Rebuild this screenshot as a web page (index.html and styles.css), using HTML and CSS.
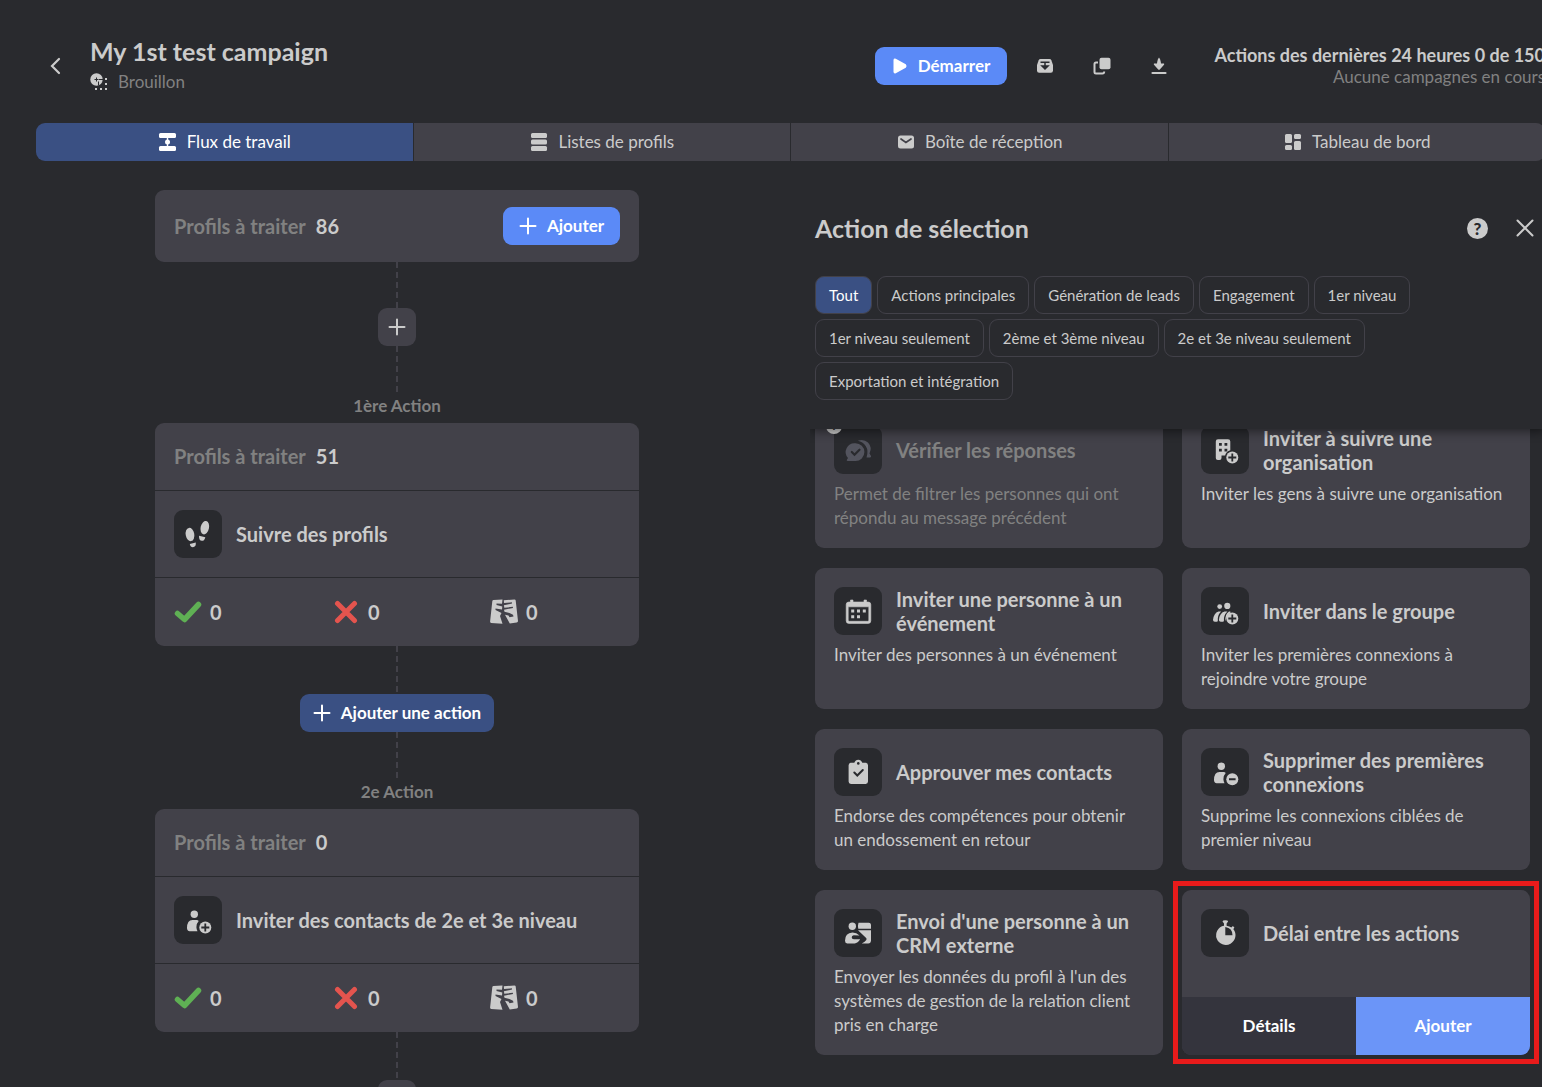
FILE: index.html
```html
<!doctype html>
<html lang="fr">

<head>
    <meta charset="utf-8">
    <title>My 1st test campaign</title>
    <link rel="stylesheet" href="styles.css">
</head>

<body>
    <svg class="sprite" aria-hidden="true">
        <symbol id="plus" viewBox="0 0 18 18">
            <path d="M9 1.5v15M1.5 9h15" fill="none" stroke="currentColor" stroke-width="2" stroke-linecap="round"/>
        </symbol>
        <symbol id="check" viewBox="0 0 28 24">
            <path d="M3.5 13.5L10.5 19.5L24.5 4.5" fill="none" stroke="#5fb054" stroke-width="5.5" stroke-linecap="round" stroke-linejoin="round"/>
        </symbol>
        <symbol id="cross" viewBox="0 0 24 24">
            <path d="M3.5 3.5l17 17M20.5 3.5l-17 17" fill="none" stroke="#e4544e" stroke-width="5" stroke-linecap="round"/>
        </symbol>
        <symbol id="torn" viewBox="0 0 28 26">
            <path d="M3.500 1L12.500.5L12 4.800L6.500 4.500V6L12.300 7.500L12 10.500L5.500 9.500V11L11.500 14L10 17L12.500 24.800L1.200 24Q0 23.800.1 22.500L2.300 2.200Q2.500 1 3.500 1z"/>
            <path d="M13.800 1.200L24.500.4q1 0 1.200 1L28 22q0 1.300-1.300 1.500L19.800 24.600L15 15.800L18.500 16.500L19.500 18.300L23.500 17.500L23 15.800L19.500 14L14.500 12.800L14 10.800L23 9L22.800 7.800L14.300 8.800L13.900 6.300L22 4.500L21.900 3.300L14 4z"/>
        </symbol>
        <symbol id="steps" viewBox="0 0 48 48">
            <ellipse cx="16" cy="24.5" rx="4.3" ry="6.7" transform="rotate(-10 16 24.5)"/>
            <path d="M15.800 34l6-1.500q.3 4.600-3 4.700-2.300 0-3-3.200z"/>
            <ellipse cx="30.8" cy="17.7" rx="4.2" ry="6.8" transform="rotate(12 30.8 17.7)"/>
            <path d="M25 25.700l6.300 1.500q-.8 3.700-3.500 3.600-3-.3-2.800-5.100z"/>
        </symbol>
        <symbol id="person" viewBox="0 0 48 48">
            <circle cx="20.3" cy="18.2" r="3.7"/>
            <path d="M18.500 24h4.200q1.300.2 2 1-2.600 2.800-2.300 6.300.1 2 1.100 3.900H15.700Q13 35 13 32q0-7.800 5.500-8z"/>
        </symbol>
        <symbol id="person-plus" viewBox="0 0 48 48">
            <use href="#person"/>
            <use href="#badge-plus"/>
        </symbol>
        <symbol id="person-minus" viewBox="0 0 48 48">
            <use href="#person"/>
            <circle cx="31.3" cy="31.2" r="6"/>
            <path d="M28 31.200h6.600" stroke="#292a2e" stroke-width="2"/>
        </symbol>
        <symbol id="badge-plus" viewBox="0 0 48 48">
            <circle cx="31.3" cy="31.5" r="6"/>
            <path d="M31.300 27.500v8M27.300 31.500h8" stroke="#292a2e" stroke-width="1.8"/>
        </symbol>
        <symbol id="calendar" viewBox="0 0 48 48">
            <path d="M16.500 13h2.500v2h11v-2h2.500v2h1.700q2.600 0 2.600 2.600v16.200q0 2.600-2.600 2.600H14.800q-2.600 0-2.600-2.600V17.600q0-2.600 2.600-2.600h1.700zM14.200 19.800v13.500q0 1 1 1h18.600q1 0 1-1V19.800z" fill-rule="evenodd" stroke="currentColor" stroke-width=".6"/>
            <path d="M17.200 22.500h3v3h-3zM23 22.500h3v3h-3zM28.800 22.500h3v3h-3zM17.200 28.300h3v3h-3zM23 28.300h3v3h-3z"/>
        </symbol>
        <symbol id="group" viewBox="0 0 48 48">
            <circle cx="18.7" cy="19.6" r="2.4"/>
            <circle cx="26.3" cy="18.9" r="3.1"/>
            <path d="M17.500 24.500q-4.800 1.500-5.500 8.500.1 1.700 1.800 1.800 2.500 0 3-.6-.7-5.700 3.300-9.700zM23.500 24.500q-5 1.500-5.600 8.500.1 1.700 1.800 1.800 2.800 0 3.200-.6-.6-5.700 3.500-9.700zM28 24.500q-4.500 3-3.500 9.700 1-5.400 5-8.200l-.2-1.500z"/>
            <use href="#badge-plus"/>
        </symbol>
        <symbol id="building" viewBox="0 0 48 48">
            <path d="M17 13.300h10q2.300 0 2.300 2.300v8.600q-4.300 1.200-5.200 5.300h-3.600v2.600q0 2-2 2h-1.700q-2 0-2-2V15.600q0-2.300 2.200-2.300zM18 17v2.800h2.800V17zM23.500 17v2.800h2.800V17zM18 22.800v2.800h2.800v-2.800zM23.500 22.800v2.800h2.800v-2.800z" fill-rule="evenodd"/>
            <use href="#badge-plus"/>
        </symbol>
        <symbol id="replies" viewBox="0 0 48 48">
            <path d="M21.500 17.200a8.900 8.900 0 1 1 0 17.800h-8q-1.300-.3-.5-1.400l1-1.600a8.900 8.900 0 0 1 7.500-14.800z"/>
            <path d="M23.800 14.800q6-2.200 10.200 1.800 4.500 5 1.500 10.800l1.500 2.600q.4 1.300-1 1.500h-3.500q2.300-6.600-.8-11.400-3-4.300-7.900-5.300z"/>
            <path d="M17.800 26l2.700 2.700 5-5" fill="none" stroke="#292a2e" stroke-width="2.2" stroke-linecap="round"/>
        </symbol>
        <symbol id="clipboard" viewBox="0 0 48 48">
            <path d="M17 14.800h3.300q1.200-3 4-3t4 3h3.300q2.400.1 2.400 2.500v16.300q0 2.400-2.400 2.400H17q-2.400 0-2.400-2.400V17.300q0-2.400 2.400-2.500z"/>
            <circle cx="24.3" cy="15.4" r="1.3" fill="#292a2e"/>
            <path d="M20.300 24.500l3 3 5.500-5.500" fill="none" stroke="#292a2e" stroke-width="2" stroke-linecap="round"/>
        </symbol>
        <symbol id="crm" viewBox="0 0 48 48">
            <circle cx="18.3" cy="17.2" r="3.7"/>
            <path d="M24.500 13.700h10.300q2 0 2.200 2v4.100H24.300q-1-2.200.2-6.100zM24 21.200h13v10.300q-.2 3-2.700 3h-6.600q2.500-1 4.600-3.600.8-1.200-.4-2.100zM18.500 23.500q4 .2 7 3l-5.800-.2q-2 .5-2 2 0 1.800 2.200 2h6.300q-2.500 4-5.500 4.200h-7.500q-2.200-.2-2.200-2.700 0-8 7.500-8.300z"/>
        </symbol>
        <symbol id="stopwatch" viewBox="0 0 48 48">
            <path d="M21.500 12.500q0-1.300 2.800-1.300t2.800 1.300l-1.500 2v2.200q3 .5 4.800 1.800l1-1.300 2 .7-1 2.300a9.700 9.700 0 1 1-9.400-3.500v-2.200zM24.300 18v8.300h7.200q0-7.200-7.200-8.300z" fill-rule="evenodd"/>
        </symbol>
    </svg>

    <div class="page">
        <header class="header">
            <a class="back" href="#" aria-label="Retour">
                <svg width="14" height="20" viewBox="0 0 14 20"><path d="M11 3L4 10l7 7" fill="none" stroke="currentColor" stroke-width="2.2" stroke-linecap="round"/></svg>
            </a>
            <div class="campaign">
                <h1>My 1st test campaign</h1>
                <div class="status">
                    <svg width="18" height="18" viewBox="0 0 18 18">
                        <circle cx="6.5" cy="6.5" r="6.2" fill="currentColor"/>
                        <path d="M4.500 6.500h4M6.500 4.500v4M9 6.500h4M8.500 8.500v4" stroke="#292a2e" stroke-width="1"/>
                        <path d="M15 5h2v2h-2zM15 10h2v2h-2zM15 15h2v2h-2zM10 15h2v2h-2zM5 15h2v2H5z" fill="currentColor"/>
                    </svg>
                    Brouillon
                </div>
            </div>
            <div class="tools">
                <button class="btn btn-start" type="button">
                    <svg width="16" height="18" viewBox="0 0 16 18"><path d="M1.500 3v12q.3 2 2.300 1.200l10-5.500q1.600-1.700 0-3.400l-10-5.500Q1.800 1 1.500 3z" fill="currentColor"/></svg>
                    Démarrer
                </button>
                <button class="tool" type="button" aria-label="Archiver">
                    <svg width="18" height="18" viewBox="0 0 18 18"><path d="M4.500 2h9q1.300 0 1.800 1.300L17 8v5.500q0 2.200-2.200 2.200H3.200Q1 15.700 1 13.500V8l1.700-4.700Q3.200 2 4.500 2z"/><path d="M4.500 5.200h9M9 5v7M6 9L9 12l3-3z" stroke="#292a2e" stroke-width="1.500" fill="#292a2e"/></svg>
                </button>
                <button class="tool" type="button" aria-label="Dupliquer">
                    <svg width="18" height="18" viewBox="0 0 18 18"><rect x="6.5" y=".7" width="11" height="11.5" rx="2"/><path d="M5 5.500H3Q1.500 5.500 1.500 7v8q0 1.500 1.500 1.500h6.500q1.700 0 1.700-2" fill="none" stroke="currentColor" stroke-width="2"/></svg>
                </button>
                <button class="tool" type="button" aria-label="Télécharger">
                    <svg width="18" height="18" viewBox="0 0 18 18"><path d="M9 .5q1.300 1 1.800 4.500l.2 1.500h3q.6.600-.2 1.400L9.800 12.500q-.8.700-1.600 0L4.200 7.900Q3.400 7.100 4 6.500h3l.2-1.500Q7.700 1.500 9 .5z"/><path d="M2.500 16h13" stroke="currentColor" stroke-width="2.2" stroke-linecap="round"/></svg>
                </button>
            </div>
            <div class="limits">
                <strong>Actions des dernières 24 heures 0 de 150</strong>
                <span>Aucune campagnes en cours</span>
            </div>
        </header>

        <nav class="tabs">
            <a class="tab active" href="#">
                <svg width="20" height="20" viewBox="0 0 20 20"><rect x="1" y="1" width="17" height="5" rx="1.5"/><rect x="1" y="14" width="17" height="5" rx="1.5"/><path d="M8.800 5h1.400v10H8.800z"/><circle cx="9.5" cy="10" r="2.5"/></svg>
                Flux de travail
            </a>
            <a class="tab" href="#">
                <svg width="20" height="20" viewBox="0 0 20 20"><rect x="2" y="1" width="16" height="5" rx="1.5"/><rect x="2" y="7.5" width="16" height="5" rx="1.5"/><rect x="2" y="14" width="16" height="5" rx="1.5"/></svg>
                Listes de profils
            </a>
            <a class="tab" href="#">
                <svg width="20" height="20" viewBox="0 0 20 20"><rect x="2" y="3.5" width="16" height="13" rx="2.5"/><path d="M5 7l4.900 3.500L15 7" fill="none" stroke="#424149" stroke-width="1.7" stroke-linecap="round"/></svg>
                Boîte de réception
            </a>
            <a class="tab" href="#">
                <svg width="20" height="20" viewBox="0 0 20 20"><rect x="2" y="2" width="7" height="9" rx="1.5"/><rect x="11" y="2" width="7" height="5" rx="1.5"/><rect x="2" y="13" width="7" height="5" rx="1.5"/><rect x="11" y="9" width="7" height="9" rx="1.5"/></svg>
                Tableau de bord
            </a>
        </nav>

        <main class="content">
            <section class="flow">
                <div class="card queue">
                    <span class="muted">Profils à traiter</span>
                    <span>86</span>
                    <button class="btn btn-add" type="button"><svg width="18" height="18"><use href="#plus"/></svg>Ajouter</button>
                </div>
                <div class="line"></div>
                <button class="plus" type="button" aria-label="Ajouter"><svg width="18" height="18"><use href="#plus"/></svg></button>
                <div class="line"></div>
                <div class="step">1ère Action</div>
                <div class="card">
                    <div class="profiles"><span class="muted">Profils à traiter</span> <span>51</span></div>
                    <div class="action">
                        <svg class="icon"><use href="#steps"/></svg>
                        Suivre des profils
                    </div>
                    <div class="results">
                        <span class="result ok"><svg width="28" height="24"><use href="#check"/></svg>0</span>
                        <span class="result ko"><svg width="24" height="24"><use href="#cross"/></svg>0</span>
                        <span class="result"><svg width="28" height="26"><use href="#torn"/></svg>0</span>
                    </div>
                </div>
                <div class="line long"></div>
                <button class="btn btn-action" type="button"><svg width="18" height="18"><use href="#plus"/></svg>Ajouter une action</button>
                <div class="line"></div>
                <div class="step">2e Action</div>
                <div class="card">
                    <div class="profiles"><span class="muted">Profils à traiter</span> <span>0</span></div>
                    <div class="action">
                        <svg class="icon"><use href="#person-plus"/></svg>
                        Inviter des contacts de 2e et 3e niveau
                    </div>
                    <div class="results">
                        <span class="result ok"><svg width="28" height="24"><use href="#check"/></svg>0</span>
                        <span class="result ko"><svg width="24" height="24"><use href="#cross"/></svg>0</span>
                        <span class="result"><svg width="28" height="26"><use href="#torn"/></svg>0</span>
                    </div>
                </div>
                <div class="line long"></div>
                <button class="plus" type="button" aria-label="Ajouter"><svg width="18" height="18"><use href="#plus"/></svg></button>
            </section>

            <section class="panel">
                <div class="panel-head">
                    <div class="panel-title">
                        <h2>Action de sélection</h2>
                        <button class="help" type="button" aria-label="Aide">?</button>
                        <button class="close" type="button" aria-label="Fermer">
                            <svg width="20" height="20" viewBox="0 0 20 20"><path d="M2.500 2.500l15 15M17.500 2.500l-15 15" fill="none" stroke="currentColor" stroke-width="2" stroke-linecap="round"/></svg>
                        </button>
                    </div>
                    <div class="filters">
                        <button class="filter active" type="button">Tout</button>
                        <button class="filter" type="button">Actions principales</button>
                        <button class="filter" type="button">Génération de leads</button>
                        <button class="filter" type="button">Engagement</button>
                        <button class="filter" type="button">1er niveau</button>
                        <button class="filter" type="button">1er niveau seulement</button>
                        <button class="filter" type="button">2ème et 3ème niveau</button>
                        <button class="filter" type="button">2e et 3e niveau seulement</button>
                        <button class="filter" type="button">Exportation et intégration</button>
                    </div>
                </div>
                <div class="list">
                    <div class="tiles">
                        <article class="tile disabled">
                            <span class="alert">!</span>
                            <svg class="icon"><use href="#replies"/></svg>
                            <h3>Vérifier les réponses</h3>
                            <p>Permet de filtrer les personnes qui ont répondu au message précédent</p>
                        </article>
                        <article class="tile">
                            <svg class="icon"><use href="#building"/></svg>
                            <h3>Inviter à suivre une organisation</h3>
                            <p>Inviter les gens à suivre une organisation</p>
                        </article>
                        <article class="tile">
                            <svg class="icon"><use href="#calendar"/></svg>
                            <h3>Inviter une personne à un événement</h3>
                            <p>Inviter des personnes à un événement</p>
                        </article>
                        <article class="tile">
                            <svg class="icon"><use href="#group"/></svg>
                            <h3>Inviter dans le groupe</h3>
                            <p>Inviter les premières connexions à rejoindre votre groupe</p>
                        </article>
                        <article class="tile">
                            <svg class="icon"><use href="#clipboard"/></svg>
                            <h3>Approuver mes contacts</h3>
                            <p>Endorse des compétences pour obtenir un endossement en retour</p>
                        </article>
                        <article class="tile">
                            <svg class="icon"><use href="#person-minus"/></svg>
                            <h3>Supprimer des premières connexions</h3>
                            <p>Supprime les connexions ciblées de premier niveau</p>
                        </article>
                        <article class="tile">
                            <svg class="icon"><use href="#crm"/></svg>
                            <h3>Envoi d'une personne à un CRM externe</h3>
                            <p>Envoyer les données du profil à l'un des systèmes de gestion de la relation client pris en charge</p>
                        </article>
                        <article class="tile selected">
                            <svg class="icon"><use href="#stopwatch"/></svg>
                            <h3>Délai entre les actions</h3>
                            <div class="tile-buttons">
                                <button type="button">Détails</button>
                                <button class="primary" type="button">Ajouter</button>
                            </div>
                        </article>
                    </div>
                </div>
            </section>
        </main>
    </div>
</body>

</html>
```
FILE: styles.css
```css
* {
    box-sizing: border-box;
}

body {
    margin: 0;
    font-family: Lato, "Open Sans", sans-serif;
    font-size: 17px;
    line-height: 24px;
    color: #cbcbcb;
    background: #292a2e;
    overflow: hidden;
}

h1, h2, h3, p {
    margin: 0;
}

button {
    font: inherit;
    color: inherit;
    border: none;
    padding: 0;
    background: none;
    cursor: pointer;
}

a {
    color: inherit;
    text-decoration: none;
}

svg {
    flex: none;
    fill: currentColor;
}

.sprite {
    display: none;
}

/* the page is a little wider than the window */
.page {
    display: flex;
    flex-direction: column;
    height: 100vh;
    margin: 0 -3px 0 36px;
}

.header {
    display: flex;
    align-items: center;
    flex: none;
    height: 123px;
    padding-top: 8px;
}

.back {
    display: flex;
    width: 54px;
    padding-left: 12px;
}

h1 {
    font-size: 25px;
    line-height: 32px;
}

.status {
    display: flex;
    align-items: center;
    gap: 10px;
    height: 30px;
    color: #818181;
}

.status svg {
    color: #cbcbcb;
}

.tools {
    display: flex;
    align-items: center;
    gap: 39px;
    margin-left: auto;
}

.tool {
    display: flex;
}

.btn {
    display: flex;
    align-items: center;
    justify-content: center;
    gap: 10px;
    height: 38px;
    color: #fff;
    font-weight: bold;
    border-radius: 9px;
    background: #5b8af7;
}

.btn-start {
    width: 132px;
    margin-right: -10px;
}

.limits {
    display: flex;
    flex-direction: column;
    align-items: flex-end;
    width: 377px;
    line-height: 21px;
}

.limits strong {
    font-size: 18px;
}

.limits span {
    color: #818181;
}

.tabs {
    display: flex;
    flex: none;
    gap: 1px;
    border-radius: 9px;
    overflow: hidden;
}

.tab {
    display: flex;
    flex: 1;
    align-items: center;
    justify-content: center;
    gap: 9px;
    height: 38px;
    background: #424149;
}

.tab.active {
    color: #fff;
    background: #3a5083;
}

.content {
    display: grid;
    grid-template-columns: 722fr 787fr;
    flex: 1;
    min-height: 0;
}

/* workflow column */
.flow {
    display: flex;
    flex-direction: column;
    align-items: center;
    padding-top: 29px;
    overflow: hidden;
}

.flow > * {
    flex: none;
}

.card {
    width: 484px;
    font-size: 20px;
    font-weight: bold;
    border-radius: 9px;
    background: #424149;
}

.queue {
    display: flex;
    align-items: center;
    gap: 10px;
    height: 72px;
    padding: 0 19px;
}

.muted {
    color: #818181;
}

.btn-add {
    width: 117px;
    margin-left: auto;
    font-size: 17px;
}

.line {
    width: 2px;
    height: 46px;
    background: repeating-linear-gradient(#424149 0 6px, transparent 6px 10px);
}

.line.long {
    height: 48px;
}

.plus {
    display: flex;
    align-items: center;
    justify-content: center;
    width: 38px;
    height: 38px;
    border-radius: 9px;
    background: #424149;
}

.btn-action {
    width: 194px;
    background: #3a5083;
}

.step {
    height: 31px;
    line-height: 28px;
    font-weight: bold;
    color: #818181;
}

.profiles {
    display: flex;
    align-items: center;
    gap: 10px;
    height: 67px;
    padding: 0 19px 2px;
}

.action {
    display: flex;
    align-items: center;
    gap: 14px;
    height: 88px;
    padding: 0 19px;
    border: solid #292a2e;
    border-width: 1px 0;
}

.icon {
    width: 48px;
    height: 48px;
    border-radius: 9px;
    background: #292a2e;
}

.results {
    display: flex;
    align-items: center;
    height: 68px;
    padding: 0 19px;
}

.result {
    display: flex;
    align-items: center;
    gap: 8px;
}

.result.ok {
    width: 160px;
}

.result.ko {
    width: 156px;
    gap: 10px;
}

/* action picker */
.panel {
    display: flex;
    flex-direction: column;
    min-height: 0;
    padding-left: 52px;
    overflow: hidden;
}

.panel-head {
    position: relative;
    z-index: 1;
    padding: 47px 10px 29px 5px;
    background: #292a2e;
    box-shadow: 0 2px 10px rgba(0, 0, 0, .5);
    clip-path: inset(0 0 -14px 0);
}

.panel-title {
    display: flex;
    align-items: center;
    height: 40px;
    margin-bottom: 28px;
}

h2 {
    margin-right: auto;
    font-size: 25px;
}

.help {
    width: 21px;
    height: 21px;
    margin-right: 27px;
    font-weight: 900;
    line-height: 21px;
    color: #292a2e;
    border-radius: 50%;
    background: #cbcbcb;
}

.close {
    display: flex;
}

.filters {
    display: flex;
    flex-wrap: wrap;
    gap: 5px;
}

.filter {
    height: 38px;
    padding: 0 13px;
    font-size: 15px;
    border: 1px solid #424149;
    border-radius: 9px;
}

.filter.active {
    color: #fff;
    background: #3a5083;
}

.list {
    flex: 1;
    min-height: 0;
    padding: 0 15px 0 5px;
    overflow: hidden;
}

/* scrolled past the top of the first row */
.tiles {
    display: grid;
    grid-template-columns: 1fr 1fr;
    gap: 20px 19px;
    margin-top: -22px;
}

.tile {
    position: relative;
    display: grid;
    grid-template-columns: 48px 1fr;
    grid-template-rows: 48px auto;
    column-gap: 14px;
    row-gap: 8px;
    min-height: 141px;
    padding: 19px 19px 18px;
    border-radius: 9px;
    background: #424149;
}

.tile h3 {
    align-self: center;
    font-size: 20px;
}

.tile p {
    grid-column: 1 / 3;
}

.tile.disabled {
    color: #818181;
}

.tile.disabled .icon {
    color: #53545e;
}

.alert {
    position: absolute;
    top: 11px;
    left: 11px;
    width: 16px;
    height: 16px;
    font-size: 12px;
    font-weight: 900;
    line-height: 16px;
    text-align: center;
    color: #292a2e;
    border-radius: 50%;
    background: #cbcbcb;
}

.tile.selected::after {
    content: "";
    position: absolute;
    inset: -9px;
    border: 5px solid #e81b1b;
    pointer-events: none;
}

.tile-buttons {
    position: absolute;
    right: 0;
    bottom: 0;
    left: 0;
    display: flex;
    height: 58px;
    border-radius: 0 0 9px 9px;
    overflow: hidden;
}

.tile-buttons button {
    flex: 1;
    color: #fff;
    font-weight: bold;
    background: #34343d;
}

.tile-buttons .primary {
    background: #6b95f8;
}
```
